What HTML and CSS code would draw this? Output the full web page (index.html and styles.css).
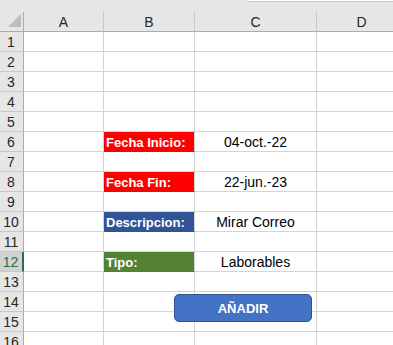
FILE: index.html
```html
<!DOCTYPE html>
<html lang="es">
<head>
  <meta charset="UTF-8">
  <title>Hoja</title>
  <link rel="stylesheet" href="styles.css">
</head>
<body>

<div class="topbar"><div class="fx"></div></div>

<div class="sheet">
  <div class="hdr corner"><span class="tri"></span></div>
  <div class="hdr col">A</div>
  <div class="hdr col">B</div>
  <div class="hdr col">C</div>
  <div class="hdr col">D</div>

  <div class="hdr num">1</div><div class="cell"></div><div class="cell"></div><div class="cell"></div><div class="cell"></div>
  <div class="hdr num">2</div><div class="cell"></div><div class="cell"></div><div class="cell"></div><div class="cell"></div>
  <div class="hdr num">3</div><div class="cell"></div><div class="cell"></div><div class="cell"></div><div class="cell"></div>
  <div class="hdr num">4</div><div class="cell"></div><div class="cell"></div><div class="cell"></div><div class="cell"></div>
  <div class="hdr num">5</div><div class="cell"></div><div class="cell"></div><div class="cell"></div><div class="cell"></div>
  <div class="hdr num">6</div><div class="cell"></div><div class="cell label red">Fecha Inicio:</div><div class="cell value">04-oct.-22</div><div class="cell"></div>
  <div class="hdr num">7</div><div class="cell"></div><div class="cell"></div><div class="cell"></div><div class="cell"></div>
  <div class="hdr num">8</div><div class="cell"></div><div class="cell label red">Fecha Fin:</div><div class="cell value">22-jun.-23</div><div class="cell"></div>
  <div class="hdr num">9</div><div class="cell"></div><div class="cell"></div><div class="cell"></div><div class="cell"></div>
  <div class="hdr num">10</div><div class="cell"></div><div class="cell label blue">Descripcion:</div><div class="cell value">Mirar Correo</div><div class="cell"></div>
  <div class="hdr num">11</div><div class="cell"></div><div class="cell"></div><div class="cell"></div><div class="cell"></div>
  <div class="hdr num active">12</div><div class="cell"></div><div class="cell label green">Tipo:</div><div class="cell value">Laborables</div><div class="cell"></div>
  <div class="hdr num">13</div><div class="cell"></div><div class="cell"></div><div class="cell"></div><div class="cell"></div>
  <div class="hdr num">14</div><div class="cell"></div><div class="cell"></div><div class="cell"></div><div class="cell"></div>
  <div class="hdr num">15</div><div class="cell"></div><div class="cell"></div><div class="cell"></div><div class="cell"></div>
  <div class="hdr num">16</div><div class="cell"></div><div class="cell"></div><div class="cell"></div><div class="cell"></div>

  <button class="add" type="button">AÑADIR</button>
</div>

</body>
</html>
```

FILE: styles.css
```css
* {
  box-sizing: border-box;
}

body {
  margin: 0;
  font-family: "Liberation Sans", Arial, sans-serif;
  font-size: 14px;
  background: #fff;
  overflow: hidden;
}

.topbar {
  height: 12px;
  background: #e6e6e6;
}

.fx {
  margin-left: 248px;
  height: 2px;
  background: #fff;
  border-bottom: 1px solid #c6c6c6;
}

.sheet {
  position: relative;
  display: grid;
  grid-template-columns: 24px 80px 91px 122px 90px;
  grid-auto-rows: 20px;
}

.cell {
  border-right: 1px solid #d4d4d4;
  border-bottom: 1px solid #d4d4d4;
  line-height: 20px;
  white-space: nowrap;
  overflow: hidden;
}

.hdr {
  background: #e6e6e6;
  color: #262626;
  line-height: 20px;
  text-align: center;
  border-right: 1px solid #c8c8c8;
  border-bottom: 1px solid #c8c8c8;
}

.col {
  border-bottom-color: #ababab;
}

.corner {
  display: flex;
  justify-content: flex-end;
  align-items: flex-end;
  padding: 0 2px 4px 0;
  border-right-color: #ababab;
  border-bottom-color: #ababab;
}

.tri {
  width: 0;
  height: 0;
  border-left: 13px solid transparent;
  border-bottom: 13px solid #bcbcbc;
}

.num {
  border-right-color: #ababab;
  padding-right: 1px;
}

.num.active {
  background: #d2d2d2;
  color: #217346;
  border-right: 2px solid #217346;
}

.label {
  color: #fff;
  font-weight: bold;
  font-size: 13px;
  padding-left: 2px;
  line-height: 21px;
}

.red {
  background: #ff0000;
  border-bottom-color: #ff0000;
}

.blue {
  background: #2f5597;
  border-bottom-color: #2f5597;
}

.green {
  background: #548235;
  border-bottom-color: #548235;
}

.value {
  text-align: center;
  color: #000;
  line-height: 21px;
}

.add {
  position: absolute;
  left: 174px;
  top: 282px;
  width: 138px;
  height: 28px;
  background: #4472c4;
  border: 1px solid #2f528f;
  border-radius: 5px;
  color: #fff;
  font-family: "Liberation Sans", Arial, sans-serif;
  font-weight: bold;
  font-size: 13px;
  padding: 0;
}
```
